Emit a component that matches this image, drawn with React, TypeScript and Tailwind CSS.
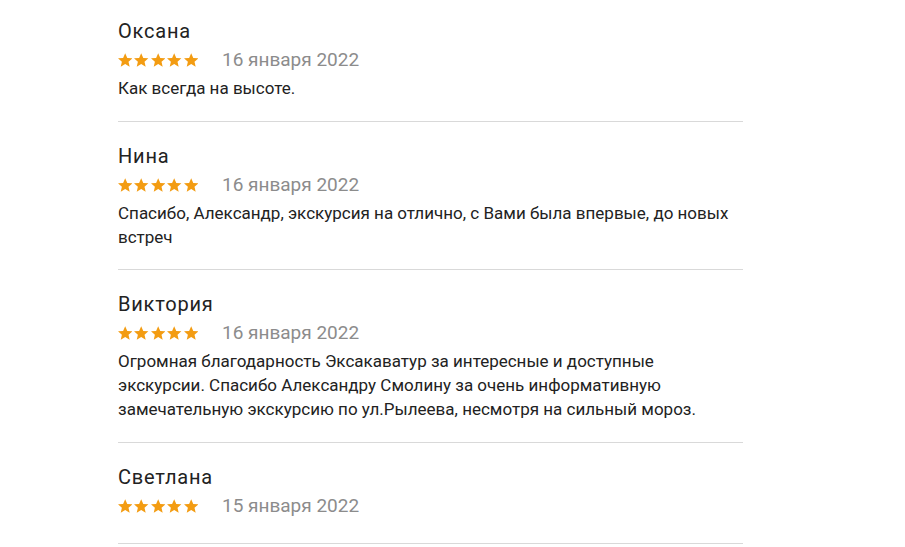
const reviews = [
  { name: 'Оксана', date: '16 января 2022', text: 'Как всегда на высоте.' },
  {
    name: 'Нина',
    date: '16 января 2022',
    text: 'Спасибо, Александр, экскурсия на отлично, с Вами была впервые, до новых встреч',
  },
  {
    name: 'Виктория',
    date: '16 января 2022',
    text: 'Огромная благодарность Эксакаватур за интересные и доступные экскурсии. Спасибо Александру Смолину за очень информативную замечательную экскурсию по ул.Рылеева, несмотря на сильный мороз.',
  },
  { name: 'Светлана', date: '15 января 2022', text: '' },
];

const Stars = () => (
  <div className="flex items-center gap-[2px]">
    {[0, 1, 2, 3, 4].map((i) => (
      <svg key={i} viewBox="2 2.5 20 19" className="w-[14.4px] h-[14px] fill-[#f39c12]">
        <path d="M12 2.5l2.9 6.6 7.1.6-5.4 4.7 1.6 7-6.2-3.7-6.2 3.7 1.6-7L2 9.7l7.1-.6z" />
      </svg>
    ))}
  </div>
);

export default function App() {
  return (
    <div className="min-h-screen bg-white font-['Roboto',sans-serif] text-[#222]">
      <div className="ml-[118px] w-[625px]">
        {reviews.map((r, i) => (
          <div
            key={r.name}
            className={`border-b border-[#d9d9d9] pb-5 ${i === 0 ? 'pt-4' : 'pt-[19px]'}`}
          >
            <div className="text-[20px] leading-[30px] tracking-[0.04em]">{r.name}</div>
            <div className="flex items-center gap-6 h-[28px] box-content pb-[3px]">
              <Stars />
              <span className="text-[19px] text-[#8c8c8c]">{r.date}</span>
            </div>
            {r.text && <p className="text-[17px] leading-[1.4]">{r.text}</p>}
          </div>
        ))}
      </div>
    </div>
  );
}
